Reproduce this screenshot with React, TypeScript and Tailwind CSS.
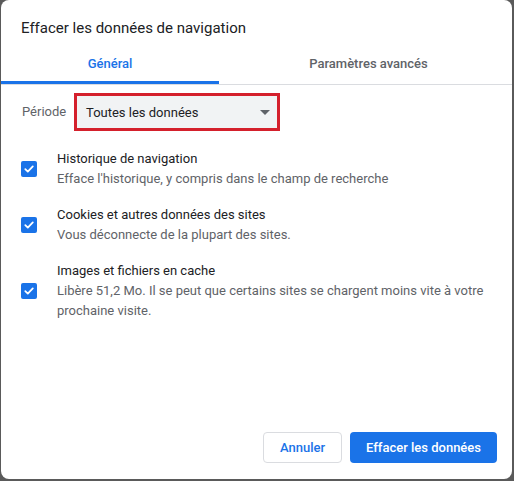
const items = [
  {
    title: 'Historique de navigation',
    desc: "Efface l'historique, y compris dans le champ de recherche",
  },
  {
    title: 'Cookies et autres données des sites',
    desc: 'Vous déconnecte de la plupart des sites.',
  },
  {
    title: 'Images et fichiers en cache',
    desc: 'Libère 51,2 Mo. Il se peut que certains sites se chargent moins vite à votre prochaine visite.',
  },
];

const CheckBox = () => (
  <div className="w-4 h-4 shrink-0 rounded-[2px] bg-[#1a73e8] flex items-center justify-center">
    <svg width="12" height="12" viewBox="0 0 12 12" fill="none">
      <path d="M2.3 6.2 L4.8 8.6 L9.8 3.4" stroke="white" strokeWidth="1.8" strokeLinecap="round" strokeLinejoin="round" />
    </svg>
  </div>
);

export default function App() {
  return (
    <div
      className="w-[514px] h-[481px] bg-[#5a5a5a] pl-px pr-[2px] pb-[2px] flex"
      style={{ fontFamily: 'Roboto, "Noto Sans", sans-serif' }}
    >
      <div className="flex-1 bg-white rounded-lg flex flex-col">
        <div className="px-5 pt-[17px] text-[15px] leading-[22px] text-[#202124]">
          Effacer les données de navigation
        </div>

        {/* tabs */}
        <div className="mt-[5px] flex border-b border-[#dadce0] text-[13px] font-medium">
          <div className="w-[218px] h-10 flex items-center justify-center text-[#1a73e8] border-b-[3px] border-[#1a73e8] -mb-px pt-[3px]">
            Général
          </div>
          <div className="flex-1 h-10 flex items-center justify-center text-[#5f6368] pl-[6px]">
            Paramètres avancés
          </div>
        </div>

        {/* period */}
        <div className="pl-[21px] pt-2 flex items-center gap-2 text-[13px]">
          <span className="text-[#5f6368] w-[44px]">Période</span>
          <div className="w-[206px] h-[38px] border-[3px] border-[#d4202c] bg-[#f1f3f4] flex items-center justify-between pl-[9px] pr-[7px] text-[#202124]">
            <span className="pt-px">Toutes les données</span>
            <svg width="10" height="5" viewBox="0 0 10 5">
              <path d="M0 0 L10 0 L5 5 Z" fill="#5f6368" />
            </svg>
          </div>
        </div>

        {/* items */}
        <div className="pt-[10px] px-5 flex flex-col">
          {items.map((it) => (
            <div key={it.title} className="flex items-center gap-5 py-2">
              <CheckBox />
              <div className="text-[13px] leading-5 pr-2">
                <div className="text-[#202124]">{it.title}</div>
                <div className="text-[#5f6368]">{it.desc}</div>
              </div>
            </div>
          ))}
        </div>

        <div className="flex-1" />

        <div className="flex justify-end gap-2 pr-[15px] pb-4 text-[13px] font-medium">
          <button className="w-[79px] h-[31px] rounded border border-[#dadce0] text-[#1a73e8] bg-white">
            Annuler
          </button>
          <button className="w-[147px] h-[31px] rounded bg-[#1a73e8] text-white">
            Effacer les données
          </button>
        </div>
      </div>
    </div>
  );
}
